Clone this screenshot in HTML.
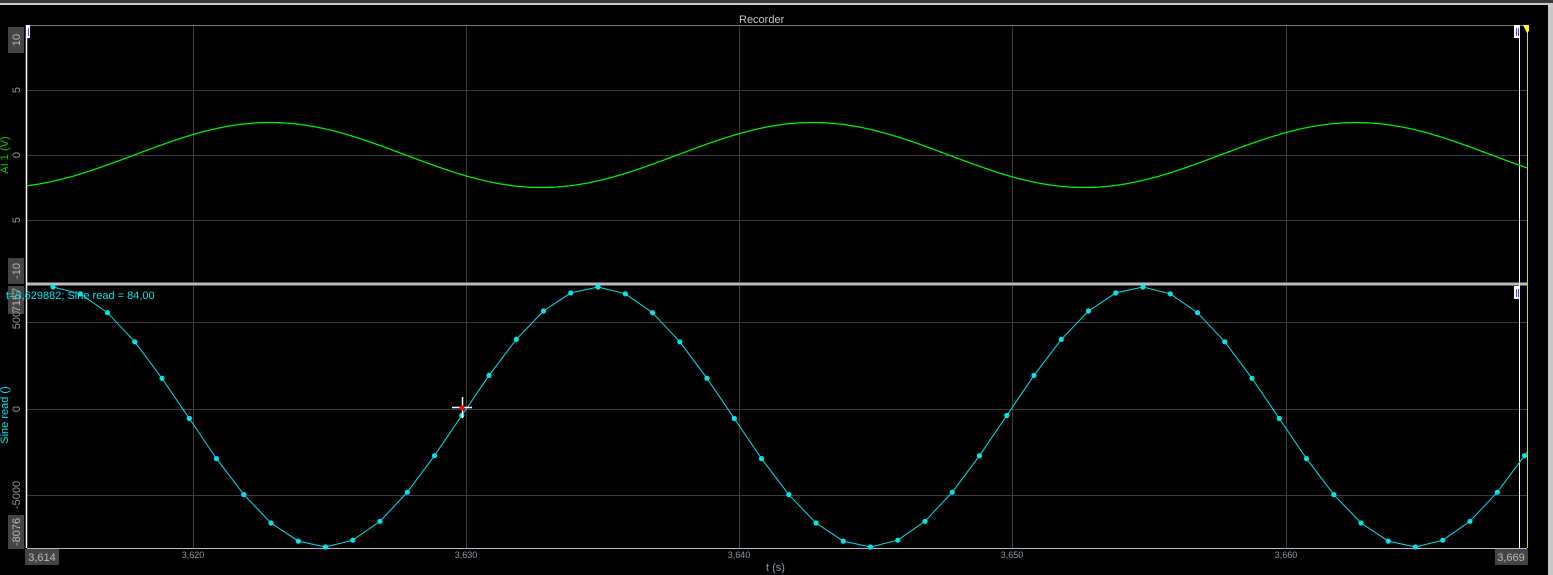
<!DOCTYPE html>
<html><head><meta charset="utf-8"><style>
body{margin:0;width:1553px;height:575px;background:#000;overflow:hidden;font-family:"Liberation Sans",sans-serif;position:relative}
.a{position:absolute}
</style></head><body>
<div class="a" style="left:0;top:0;width:1553px;height:3px;background:#3a3a3a"></div>
<div class="a" style="left:0;top:3px;width:1553px;height:2px;background:#c8c8c8"></div>
<div class="a" style="left:1548px;top:3px;width:5px;height:572px;background:#c8c8c8"></div>
<div class="a" style="left:739px;top:14px;font-size:11px;color:#c8c8c8">Recorder</div>
<svg class="a" style="left:0;top:0" width="1553" height="575" id="s"></svg>
<div class="a" style="left:6px;top:290px;font-size:11px;color:#00e5ee">t=3,629882; Sine read = 84,00</div>
<div class="a" style="left:766px;top:562px;font-size:11px;color:#8a9aa8">t (s)</div>
<script>
var s=document.getElementById('s'),h='';
function L(x1,y1,x2,y2,c,w){h+='<line x1="'+x1+'" y1="'+y1+'" x2="'+x2+'" y2="'+y2+'" stroke="'+c+'" stroke-width="'+(w||1)+'"/>';}
function T(x,y,t,c,rot,sz,bg,bw){var g='';if(bg){g='<rect x="'+(x-bw/2)+'" y="'+(y-8)+'" width="'+bw+'" height="16" fill="#444" '+(rot?'transform="rotate(-90 '+x+' '+y+')"':'')+'/>';}
h+=g+'<text x="'+x+'" y="'+(y+4)+'" fill="'+c+'" font-size="'+(sz||11)+'" text-anchor="middle" font-family="Liberation Sans" '+(rot?'transform="rotate(-90 '+x+' '+y+')"':'')+'>'+t+'</text>';}
var X0=27,X1=1527;
var gx=[193,466,739,1012,1286];
gx.forEach(function(x){L(x+.5,25,x+.5,283,'#3c3c3c');L(x+.5,286,x+.5,548,'#3c3c3c');});
[90,155,220].forEach(function(y){L(X0,y+.5,X1,y+.5,'#3c3c3c');});
[322,409,495].forEach(function(y){L(X0,y+.5,X1,y+.5,'#3c3c3c');});
L(X0,25.5,1527,25.5,'#777');
L(X0,284,1527,284,'#bbb',3);
L(X0,548.5,1527,548.5,'#bbb');
L(26.5,25,26.5,548,'#fff',1.5);
L(1519.5,25,1519.5,548,'#fff');
L(1527.5,27,1527.5,548,'#d8d800',1);
h+='<polygon points="1523,25 1529,25 1529,31 1527,33" fill="#ff0"/>';
h+='<rect x="1514" y="25" width="6" height="13" fill="#fff"/><rect x="1516" y="28" width="1" height="8" fill="#44f"/><rect x="1518" y="28" width="1" height="8" fill="#44f"/>';
h+='<rect x="27" y="25" width="3" height="13" fill="#fff"/><rect x="28" y="28" width="1" height="8" fill="#44f"/>';
h+='<rect x="1514" y="286" width="6" height="13" fill="#fff"/><rect x="1516" y="289" width="1" height="8" fill="#44f"/><rect x="1518" y="289" width="1" height="8" fill="#44f"/>';
var p='';for(var x=X0;x<=1527;x+=2){var y=155-32.5*Math.cos(2*Math.PI*(x-270)/543);p+=(x==X0?'M':'L')+x+','+y.toFixed(1);}
h+='<path d="'+p+'" stroke="#00ee00" stroke-width="1.3" fill="none"/>';
function cy(x){return 417-130*Math.cos(2*Math.PI*(x-597)/545);}
var q='',d='';var st=27.25;
for(var k=0;;k++){var x=53+k*st- st*1;if(x>1527)break;if(x<X0)continue;var y=cy(x);q+=(q?'L':'M')+x.toFixed(1)+','+y.toFixed(1);d+='<circle cx="'+x.toFixed(1)+'" cy="'+y.toFixed(1)+'" r="2.6" fill="#00e5ee"/>';}
q+='L1527,'+cy(1527).toFixed(1);
h+='<path d="'+q+'" stroke="#00e5ee" stroke-width="1" fill="none"/>'+d;
L(452,407.5,472,407.5,'#fff',1.5);L(462.5,397,462.5,418,'#fff',1.5);
h+='<circle cx="462" cy="408" r="2.5" fill="#f00"/>';
T(16,40,'10','#bbb',1,11,1,26);T(16,90,'5','#8a9aa8',1);T(16,155,'0','#8a9aa8',1);T(16,220,'5','#8a9aa8',1);T(16,271,'-10','#bbb',1,11,1,26);
T(16,300,'7157','#bbb',1,11,1,28);T(16,320,'500','#8a9aa8',1);T(16,409,'0','#8a9aa8',1);T(16,495,'-5000','#8a9aa8',1);T(16,532,'-8076','#bbb',1,11,1,34);
T(4,155,'AI 1 (V)','#00cc00',1);T(4,415,'Sine read ()','#00e5ee',1);
h+='<rect x="25" y="549" width="34" height="16" fill="#444"/><text x="42" y="561" fill="#bbb" font-size="11" text-anchor="middle">3,614</text>';
h+='<rect x="1495" y="549" width="33" height="16" fill="#444"/><text x="1511" y="561" fill="#bbb" font-size="11" text-anchor="middle">3,669</text>';
['3,620','3,630','3,640','3,650','3,660'].forEach(function(t,i){h+='<text x="'+gx[i]+'" y="558" fill="#8a9aa8" font-size="9" text-anchor="middle">'+t+'</text>';});
s.innerHTML=h;
</script>
</body></html>
